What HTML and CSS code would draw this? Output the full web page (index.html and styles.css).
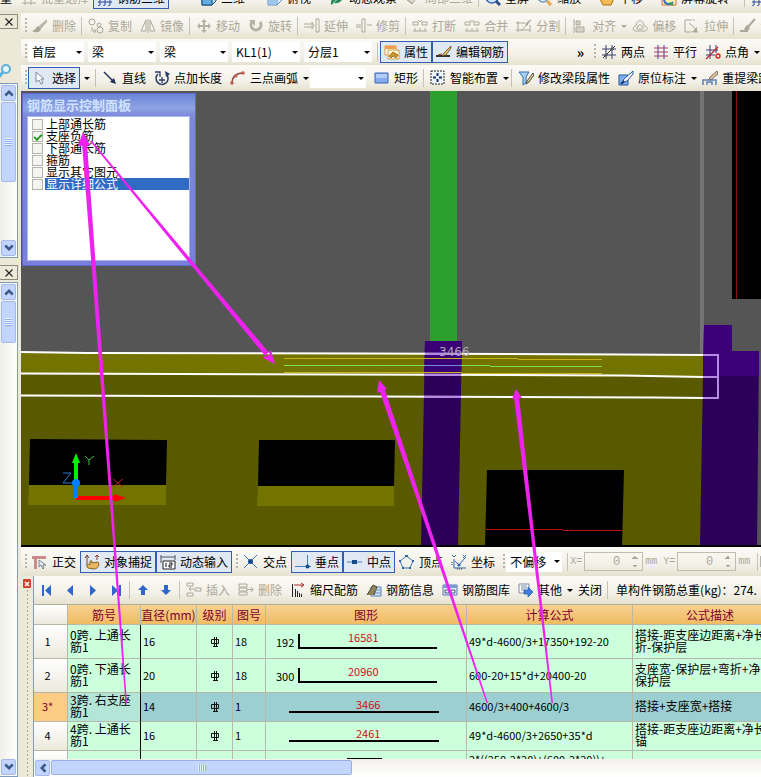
FILE: index.html
```html
<!DOCTYPE html>
<html lang="zh-CN">
<head>
  <meta charset="UTF-8">
  <meta name="viewport" content="width=device-width, initial-scale=1.0">
  <title>编辑钢筋</title>
  <link rel="stylesheet" href="styles.css">
</head>
<body>
  <!-- icon sprite -->
  <svg class="sprite" aria-hidden="true">
    <symbol id="i-batch" viewBox="0 0 16 16"><path d="M1 8h14M1 13h14M4 6v9M10 6v9M1 4h4v4H1zM8 2h5v5H8z" fill="none" stroke="currentColor"/></symbol>
    <symbol id="i-frame" viewBox="0 0 16 16"><path d="M1 4h14M1 12h14M3 1v14M8 1v14M13 1v14M3 15l-2 1M8 15l-2 1M13 15l-2 1" fill="none" stroke="#27489c"/></symbol>
    <symbol id="i-cube" viewBox="0 0 16 16"><path d="M1 5l4-4h10v10l-4 4H1z" fill="#b6daf5" stroke="#174a7c"/><path d="M1 5h10v10H1z" fill="#62aee4" stroke="#174a7c"/><path d="M11 5l4-4" stroke="#174a7c"/></symbol>
    <symbol id="i-top" viewBox="0 0 16 16"><path d="M1 7l5-5h9v8l-5 5H1z" fill="#d9edfb" stroke="#5a86c8"/><path d="M1 7h9v8M10 7l5-5" fill="none" stroke="#5a86c8"/><path d="M2 8h8v6H2z" fill="#9cc8f0"/></symbol>
    <symbol id="i-orbit" viewBox="0 0 16 16"><path d="M2 12C4 4 9 8 14 2c1 7-2 12-9 11l-3 2z" fill="#23875a"/><path d="M4 13l6-5" stroke="#b3e6c6"/></symbol>
    <symbol id="i-part" viewBox="0 0 16 16"><path d="M2 10l8-8 4 3-7 9z" fill="#ddd9cb" stroke="currentColor"/><path d="M3 10l4 3" stroke="currentColor"/></symbol>
    <symbol id="i-full" viewBox="0 0 16 16"><circle cx="7" cy="7" r="6" fill="#cfe6fb" stroke="#3566b0" stroke-width="1.5"/><path d="M4 7h6M7 4v6" stroke="#1c3f86" stroke-width="2"/><path d="M11 11l4 4" stroke="#2f4d84" stroke-width="3"/></symbol>
    <symbol id="i-zoom" viewBox="0 0 16 16"><circle cx="6" cy="7" r="5" fill="#e4f1fd" stroke="#6a97cf" stroke-width="1.5"/><path d="M10 11l4 4" stroke="#e3a84c" stroke-width="3"/></symbol>
    <symbol id="i-hand" viewBox="0 0 16 16"><path d="M4 15L1 9l2-1 2 2V3l2-1 1 1 2-1 1 2 2 0 1 7-2 4z" fill="#f4bd53" stroke="#a86f15"/></symbol>
    <symbol id="i-rot" viewBox="0 0 16 16"><path d="M1 1h14v14H1z" fill="#fff2a8" stroke="#d66a4a"/><path d="M3 10a5 5 0 0 0 9 2M5 6a5 4 0 0 1 8 3" fill="none" stroke="#2f74c4" stroke-width="2"/><path d="M8 13l4 2" stroke="#3aa04a" stroke-width="2"/></symbol>
    <symbol id="i-brush" viewBox="0 0 16 16"><path d="M15 1L7 8l2 3 6-7z" fill="#b9b6a8"/><path d="M7 8c-3 0-3 4-7 5 3 2 8 2 9-2z" fill="#aaa798"/></symbol>
    <symbol id="i-copy" viewBox="0 0 16 16"><circle cx="4" cy="4" r="3" fill="none" stroke="currentColor"/><circle cx="11" cy="7" r="2" fill="none" stroke="currentColor"/><circle cx="12" cy="12" r="3" fill="none" stroke="currentColor"/><path d="M4 9v4h3M6 11l2 2-2 2" fill="none" stroke="currentColor"/></symbol>
    <symbol id="i-mirror" viewBox="0 0 16 16"><path d="M6 2v11H1zM10 2v11h5zM8 1v14" fill="none" stroke="currentColor"/></symbol>
    <symbol id="i-move" viewBox="0 0 16 16"><path d="M8 1l3 3H9v3h3V5l3 3-3 3V9H9v3h2l-3 3-3-3h2V9H4v2L1 8l3-3v2h3V4H5z" fill="#b5b2a4"/></symbol>
    <symbol id="i-rotate" viewBox="0 0 16 16"><path d="M4 4a5 5 0 1 0 8 0" fill="none" stroke="#b5b2a4" stroke-width="3"/><path d="M1 2h6v6z" fill="#b5b2a4"/></symbol>
    <symbol id="i-extend" viewBox="0 0 16 16"><path d="M0 6h7M0 9h7M12 1h3v13h-3zM8 4v7l2-3z" fill="none" stroke="currentColor"/></symbol>
    <symbol id="i-trim" viewBox="0 0 16 16"><path d="M0 7h5M11 7h5M6 1h3v13H6zM0 9h5" fill="none" stroke="currentColor"/></symbol>
    <symbol id="i-break" viewBox="0 0 16 16"><path d="M1 4h5v3H1zM10 4h5v3h-5zM1 13h14M8 10v3M3 10v3M13 10v3M6 2l2 2M10 2L8 4" fill="none" stroke="currentColor"/></symbol>
    <symbol id="i-split" viewBox="0 0 16 16"><path d="M0 5h9M0 12h14M2 3v11M14 7v7M15 2L5 13" fill="none" stroke="currentColor"/><path d="M15 1L9 6l2 2z" fill="currentColor"/></symbol>
    <symbol id="i-align" viewBox="0 0 16 16"><path d="M2 1v14M4 3h4v4H4zM4 9h8v5H4z" fill="#d6d3c5" stroke="currentColor"/></symbol>
    <symbol id="i-offset" viewBox="0 0 16 16"><path d="M3 13c-3-1-2-5 1-5 0-7 8-7 8 0 4 0 4 5 1 5z" fill="none" stroke="currentColor"/><path d="M5 11c-1-2 1-2 1-2 0-3 4-3 4 0 2 0 2 2 0 2z" fill="none" stroke="currentColor"/></symbol>
    <symbol id="i-stretch" viewBox="0 0 16 16"><path d="M8 2H1v12h7M9 2h2M9 14h5" fill="none" stroke="currentColor"/><path d="M5 5l7 6" stroke="currentColor"/><path d="M13 9v5H8z" fill="currentColor"/></symbol>
    <symbol id="i-set" viewBox="0 0 16 16"><path d="M0 13h8M15 1L6 11" stroke="currentColor" stroke-width="2"/><path d="M7 7l3 3-3 4-3-3z" fill="currentColor"/></symbol>
    <symbol id="i-prop" viewBox="0 0 16 16"><path d="M1 2h11v9H1z" fill="#fff" stroke="#e88f38"/><path d="M1 2h11v3H1z" fill="#f0a04c"/><path d="M4 6h11v9H4z" fill="#fff6d8" stroke="#c9a04a"/><path d="M5 12l4-4 5 3-2 3-3-2-2 2z" fill="#c9962a" stroke="#7b5712" stroke-width=".7"/></symbol>
    <symbol id="i-edit" viewBox="0 0 16 16"><path d="M0 12h14" stroke="#333" stroke-width="2"/><path d="M15 2L8 9l-2 3 4-1 5-7z" fill="#e3bd63" stroke="#5d4a1e" stroke-width=".8"/><path d="M2 11l4-1" stroke="#a33"/></symbol>
    <symbol id="i-two" viewBox="0 0 16 16"><path d="M1 5h14M1 11h14M5 1v14M11 1v14" stroke="#3a3f78"/><path d="M2 14L14 2" stroke="#333"/><circle cx="5" cy="11" r="1.6" fill="#555"/><circle cx="11" cy="5" r="1.6" fill="#555"/></symbol>
    <symbol id="i-par" viewBox="0 0 16 16"><path d="M5 1v14M11 1v14" stroke="#3a3fa0"/><path d="M1 4h14M1 8h14M1 12h14" stroke="#b03868"/></symbol>
    <symbol id="i-ang" viewBox="0 0 16 16"><path d="M5 1v14M1 6h12M1 11h9M11 1v8" stroke="#3a3f78"/><path d="M1 15L13 3" stroke="#c02030" stroke-width="1.3"/><circle cx="13" cy="12" r="2" fill="none" stroke="#e02020" stroke-width="1.4"/></symbol>
    <symbol id="i-cursor" viewBox="0 0 16 16"><path d="M4 2v10l3-2 2 4 2-1-2-4h3z" fill="#fff" stroke="#7d879c"/></symbol>
    <symbol id="i-line" viewBox="0 0 16 16"><path d="M2 2l10 10" stroke="#1c2f52" stroke-width="1.4"/><path d="M14 14l-6-2 4-4z" fill="#1c2f52"/></symbol>
    <symbol id="i-len" viewBox="0 0 16 16"><path d="M4 4a6 6 0 1 0 9 1" fill="none" stroke="#2a3c66" stroke-width="1.5"/><path d="M1 2h5v5M5 10h6M8 7v6" fill="none" stroke="#2a3c66" stroke-width="1.3"/><path d="M11 1l5 3-4 3z" fill="#2a3c66"/></symbol>
    <symbol id="i-arc" viewBox="0 0 16 16"><path d="M2 14C2 7 6 3 13 3" fill="none" stroke="#8c4a48" stroke-width="1.5"/><circle cx="2" cy="13" r="1.8" fill="#c45a50"/><circle cx="6" cy="6" r="1.5" fill="#c45a50"/><circle cx="13" cy="3" r="1.8" fill="#c45a50"/></symbol>
    <symbol id="i-rect" viewBox="0 0 16 16"><path d="M1 3h13v10H1z" fill="#84aaf0" stroke="#3d62b8"/><path d="M2 4h11v4H2z" fill="#b4ccf9"/></symbol>
    <symbol id="i-smart" viewBox="0 0 16 16"><path d="M1 1h13v13H1z" fill="#eef4fb" stroke="#222" stroke-dasharray="2 1"/><path d="M7.500 3v3M7.500 9v3M3 7.500h3M9 7.500h3" stroke="#16336e" stroke-width="2"/></symbol>
    <symbol id="i-filter" viewBox="0 0 16 16"><path d="M1 2h10L8 7v6l-3 2V7z" fill="#a9d2f5" stroke="#2f6db0"/><path d="M15 3L9 11l-1 3 3-2 5-7z" fill="#e8d08a" stroke="#4a4a4a"/></symbol>
    <symbol id="i-note" viewBox="0 0 16 16"><path d="M1 5h9v10H1z" fill="#7fb0ea" stroke="#2456a0"/><path d="M15 1L6 9l-2 4 5-2 6-7z" fill="#fff" stroke="#2456a0"/><path d="M3 14l3-3" stroke="#153a78" stroke-width="2"/></symbol>
    <symbol id="i-span" viewBox="0 0 16 16"><path d="M1 15v-5h13v5M5 15v-3h5v3" fill="none" stroke="#5b82b8" stroke-width="1.5"/><path d="M15 1L8 7l-1 3 3-1 6-5z" fill="#d9c3a4" stroke="#80705c"/></symbol>
    <symbol id="i-ortho" viewBox="0 0 16 16"><path d="M0 2h14v3H5v10H2V5H0z" fill="#c98a88"/><path d="M7 6v7l2-2 2 4 1-1-1-3h3z" fill="#e6e9ee" stroke="#5f7184" stroke-width=".8"/></symbol>
    <symbol id="i-snap" viewBox="0 0 16 16"><path d="M3 1v10M13 1v5M1 4l2-3 2 3M11 3l2-2 2 2" fill="none" stroke="#8a3a30"/><path d="M4 14c-3-3 0-5 2-3V7h2v2l6-1c2 3 0 7-4 7z" fill="#eab765" stroke="#8a621c"/></symbol>
    <symbol id="i-dyn" viewBox="0 0 16 16"><path d="M1 1v8M15 1v5M1 3h14" fill="none" stroke="#555"/><path d="M3 7h12v8H3z" fill="#fff" stroke="#222"/><path d="M6 9v4M9 9h3v2H9v2h3" fill="none" stroke="#111"/></symbol>
    <symbol id="i-cross" viewBox="0 0 16 16"><path d="M1 1l13 13M14 1L1 14" stroke="#3e79b8"/><circle cx="7.500" cy="7.500" r="2.500" fill="#174a8c"/></symbol>
    <symbol id="i-perp" viewBox="0 0 16 16"><path d="M0 12.500h16M12.500 1v11" stroke="#4684c0"/><circle cx="12.500" cy="12.500" r="2" fill="#174a8c"/></symbol>
    <symbol id="i-mid" viewBox="0 0 16 16"><path d="M0 8h15" stroke="#4684c0"/><path d="M5 6h5v4H5z" fill="#174a8c"/></symbol>
    <symbol id="i-vertex" viewBox="0 0 16 16"><path d="M7.500 2L14 7l-3 7H4L1 7z" fill="none" stroke="#3f78bb"/><path d="M6 1h3v2H6zM0 6h2v2H0zM13 6h2v2h-2zM3 13h2v2H3zM10 13h2v2h-2z" fill="#2f63a8"/></symbol>
    <symbol id="i-coord" viewBox="0 0 16 16"><path d="M3 5v9h12M4 7l4 4 6-7M1 1l2 2 2-2M12 1l3 3M15 1l-3 3" fill="none" stroke="#2d64aa"/><circle cx="8" cy="11" r="1.600" fill="#2d64aa"/><path d="M1 8v4M6 15h6" stroke="#333" stroke-dasharray="1 1"/></symbol>
    <symbol id="i-first" viewBox="0 0 16 16"><path d="M3 3v11h2V3zM12 3v11L6 8.500z" fill="#2f66cc"/></symbol>
    <symbol id="i-prev" viewBox="0 0 16 16"><path d="M11 3v11L5 8.500z" fill="#2f66cc"/></symbol>
    <symbol id="i-next" viewBox="0 0 16 16"><path d="M5 3v11l6-5.500z" fill="#2f66cc"/></symbol>
    <symbol id="i-last" viewBox="0 0 16 16"><path d="M4 3v11l6-5.500zM11 3v11h2V3z" fill="#2f66cc"/></symbol>
    <symbol id="i-up" viewBox="0 0 16 16"><path d="M8 3l5 5h-3v5H6V8H3z" fill="#2f66cc"/></symbol>
    <symbol id="i-down" viewBox="0 0 16 16"><path d="M8 13l5-5h-3V3H6v5H3z" fill="#2f66cc"/></symbol>
    <symbol id="i-ins" viewBox="0 0 16 16"><path d="M1 1h6v3H1zM1 11h6v3H1zM9 6h6v3H9zM3 7h5M5 5L3 7l2 2" fill="none" stroke="currentColor"/></symbol>
    <symbol id="i-del" viewBox="0 0 16 16"><path d="M1 2h8v3H1zM1 6h8v3H1zM1 10h8v3H1zM9 7.500h6M13 5l2 2.500L13 10" fill="none" stroke="currentColor"/></symbol>
    <symbol id="i-scale" viewBox="0 0 16 16"><path d="M2.500 2v13M5.500 7v8M7.500 9v6M9.500 11v4M11.500 12v3" stroke="#222"/><path d="M4 3h9M11 1l3 2-3 2" fill="none" stroke="#b02828"/></symbol>
    <symbol id="i-info" viewBox="0 0 16 16"><path d="M5 5h10v9H5z" fill="#cfe2f8" stroke="#5b7fb0"/><path d="M1 13L7 3l4 2-3 8" fill="#8e8458" stroke="#4f4a30"/><path d="M9 8h5M9 11h5" stroke="#6d8fc4"/></symbol>
    <symbol id="i-lib" viewBox="0 0 16 16"><path d="M1 3h14v10H1z" fill="#e7eefa" stroke="#5674ac"/><path d="M1 3h14v3H1z" fill="#7d9bd4"/><path d="M3 8h4v3H3zM9 8h4v3H9z" fill="none" stroke="#4a5b80"/></symbol>
    <symbol id="i-other" viewBox="0 0 16 16"><path d="M1 2h10v9H1z" fill="#fff" stroke="#7b8aa8"/><path d="M3 4h6M3 6h6M3 8h4" stroke="#7b8aa8"/><path d="M6 8h4V5l5 5-5 5v-3H6z" fill="#3f7fe0" stroke="#1f4fa0" stroke-width=".7"/></symbol>
    <symbol id="i-x" viewBox="0 0 16 16"><path d="M4 4l8 8M12 4l-8 8" stroke="#222" stroke-width="1.300"/></symbol>
    <symbol id="i-grade" viewBox="0 0 10 12"><path d="M1.500 3.500h7v4h-7zM4.500 1v9M6.500 1v9M3 10.500h5" fill="none" stroke="#111"/></symbol>
    <symbol id="c-up" viewBox="0 0 8 8"><path d="M1 6l3-3 3 3" fill="none" stroke="#3c5a8c" stroke-width="2"/></symbol>
    <symbol id="c-down" viewBox="0 0 8 8"><path d="M1 2l3 3 3-3" fill="none" stroke="#3c5a8c" stroke-width="2"/></symbol>
    <symbol id="c-left" viewBox="0 0 8 8"><path d="M6 1L3 4l3 3" fill="none" stroke="#3c5a8c" stroke-width="2"/></symbol>
  </svg>

  <header class="top-clip">
    <div class="toolbar view-bar">
      <button class="btn cut">量</button>
      <button class="btn" disabled><svg><use href="#i-batch"/></svg>批量选择</button>
      <button class="btn on"><svg><use href="#i-frame"/></svg>钢筋三维</button>
      <span class="space"></span>
      <button class="btn"><svg><use href="#i-cube"/></svg>三维</button>
      <button class="arrow wide" aria-label="三维选项"></button>
      <button class="btn"><svg><use href="#i-top"/></svg>俯视</button>
      <button class="arrow" aria-label="俯视选项"></button>
      <button class="btn"><svg><use href="#i-orbit"/></svg>动态观察</button>
      <button class="btn" disabled><svg><use href="#i-part"/></svg>局部三维</button>
      <i class="sep"></i>
      <button class="btn"><svg><use href="#i-full"/></svg>全屏</button>
      <button class="btn"><svg><use href="#i-zoom"/></svg>缩放</button>
      <button class="arrow" aria-label="缩放选项"></button>
      <button class="btn"><svg><use href="#i-hand"/></svg>平移</button>
      <button class="arrow" aria-label="平移选项"></button>
      <button class="btn"><svg><use href="#i-rot"/></svg>屏幕旋转</button>
      <button class="arrow" aria-label="旋转选项"></button>
      <i class="sep"></i>
      <button class="btn" aria-label="线框"><svg><use href="#i-frame"/></svg></button>
    </div>
  </header>

  <div class="workspace">
    <aside class="dock">
      <button class="dock-close" aria-label="关闭"><svg><use href="#i-x"/></svg></button>
      <div class="dock-search"><svg viewBox="0 0 16 16"><circle cx="6" cy="6" r="4" fill="#e6f6fd" stroke="#5bb0dc" stroke-width="2"/><path d="M3 9l-4 5" stroke="#5bb0dc" stroke-width="3"/></svg></div>
      <div class="vscroll upper">
        <button aria-label="向上"><svg><use href="#c-up"/></svg></button>
        <div class="thumb tall"></div>
        <button class="end" aria-label="向下"><svg><use href="#c-down"/></svg></button>
      </div>
      <button class="dock-close" aria-label="关闭"><svg><use href="#i-x"/></svg></button>
      <div class="vscroll lower">
        <button aria-label="向上"><svg><use href="#c-up"/></svg></button>
        <div class="thumb"></div>
        <button class="end" aria-label="向下"><svg><use href="#c-down"/></svg></button>
      </div>
    </aside>

    <main class="main">
      <div class="toolbar">
        <i class="grip"></i>
        <button class="btn" disabled><svg><use href="#i-brush"/></svg>删除</button>
        <i class="sep"></i>
        <button class="btn" disabled><svg><use href="#i-copy"/></svg>复制</button>
        <button class="btn" disabled><svg><use href="#i-mirror"/></svg>镜像</button>
        <i class="sep"></i>
        <button class="btn" disabled><svg><use href="#i-move"/></svg>移动</button>
        <button class="btn" disabled><svg><use href="#i-rotate"/></svg>旋转</button>
        <i class="sep"></i>
        <button class="btn" disabled><svg><use href="#i-extend"/></svg>延伸</button>
        <button class="btn" disabled><svg><use href="#i-trim"/></svg>修剪</button>
        <i class="sep"></i>
        <button class="btn" disabled><svg><use href="#i-break"/></svg>打断</button>
        <button class="btn" disabled><svg><use href="#i-break"/></svg>合并</button>
        <button class="btn" disabled><svg><use href="#i-split"/></svg>分割</button>
        <i class="sep"></i>
        <button class="btn" disabled><svg><use href="#i-align"/></svg>对齐</button>
        <button class="arrow tight" disabled aria-label="对齐选项"></button>
        <button class="btn" disabled><svg><use href="#i-offset"/></svg>偏移</button>
        <button class="btn" disabled><svg><use href="#i-stretch"/></svg>拉伸</button>
        <i class="sep"></i>
        <button class="btn" disabled><svg><use href="#i-set"/></svg>设置</button>
      </div>

      <div class="toolbar">
        <i class="grip"></i>
        <label class="combo first"><select aria-label="楼层"><option>首层</option></select></label>
        <label class="combo"><select aria-label="构件类型"><option>梁</option></select></label>
        <label class="combo"><select aria-label="构件"><option>梁</option></select></label>
        <label class="combo"><select aria-label="名称"><option>KL1(1)</option></select></label>
        <label class="combo"><select aria-label="分层"><option>分层1</option></select></label>
        <i class="sep"></i>
        <button class="btn on"><svg><use href="#i-prop"/></svg>属性</button>
        <button class="btn on"><svg><use href="#i-edit"/></svg>编辑钢筋</button>
        <span class="more">»</span>
        <i class="grip"></i>
        <button class="btn"><svg><use href="#i-two"/></svg>两点</button>
        <button class="btn"><svg><use href="#i-par"/></svg>平行</button>
        <button class="btn"><svg><use href="#i-ang"/></svg>点角</button>
        <button class="arrow tight" aria-label="点角选项"></button>
      </div>

      <div class="toolbar">
        <i class="grip"></i>
        <button class="btn on"><svg><use href="#i-cursor"/></svg>选择</button>
        <button class="arrow" aria-label="选择选项"></button>
        <i class="sep"></i>
        <button class="btn"><svg><use href="#i-line"/></svg>直线</button>
        <button class="btn"><svg><use href="#i-len"/></svg>点加长度</button>
        <button class="btn"><svg><use href="#i-arc"/></svg>三点画弧</button>
        <button class="arrow tight" aria-label="画弧选项"></button>
        <label class="combo first"><select aria-label="画弧方式"><option></option></select></label>
        <button class="btn"><svg><use href="#i-rect"/></svg>矩形</button>
        <i class="sep"></i>
        <button class="btn"><svg><use href="#i-smart"/></svg>智能布置</button>
        <button class="arrow tight" aria-label="布置选项"></button>
        <i class="sep"></i>
        <button class="btn"><svg><use href="#i-filter"/></svg>修改梁段属性</button>
        <button class="btn"><svg><use href="#i-note"/></svg>原位标注</button>
        <button class="arrow tight" aria-label="标注选项"></button>
        <button class="btn"><svg><use href="#i-span"/></svg>重提梁跨</button>
      </div>

      <section class="canvas">
        <svg class="scene" viewBox="21 91 740 456" preserveAspectRatio="xMinYMin slice">
          <path d="M21 91h740v456H21z" fill="#555"/>
          <path d="M430 91h27v252h-27z" fill="#2ca02c"/>
          <path d="M700 91h4v264h-4z" fill="#747474"/>
          <path d="M732 91h29v208h-29z" fill="#000"/>
          <path d="M736.500 91v208" stroke="#8c1010"/>
          <!-- wall and beam -->
          <path d="M21 352L703 355V547H21z" fill="#595a00"/>
          <path d="M21 352L703 355V377L21 374z" fill="#737300"/>
          <path d="M30 439L167 440 166 485H29z" fill="#000"/>
          <path d="M29 485H166V505H28z" fill="#737300"/>
          <path d="M259 440H395L394 486H258z" fill="#000"/>
          <path d="M258 486H394V506H257z" fill="#737300"/>
          <path d="M487 470H624L622 547H485z" fill="#000"/>
          <path d="M486 529.500H563M563 530.500H622" stroke="#c01010"/>
          <!-- columns -->
          <path d="M425 341H462L458 547H421z" fill="#2c0058"/>
          <path d="M425 341H462L461 376H424z" fill="#3a0075"/>
          <path d="M704 325H732V351H759L757 547H700L703 376z" fill="#2c0058"/>
          <path d="M704 325H732V351H759V376H703z" fill="#3c0078"/>
          <path d="M21 546H761" stroke="#000" stroke-width="2"/>
          <path d="M284 358.500H518M518 359.500H602M284 372.500H462M462 373.500H602" stroke="#c8b020"/>
          <path d="M284 365.500H490M490 366.500H602" stroke="#7be050"/>
          <path d="M21 352L87 353 364 353.500 622 354.500 703 355M21 373.500L345 374.500 624 375.500 703 377M21 395.500L375 396.500 654 397.500 703 398" fill="none" stroke="#fff" stroke-width="2"/>
          <path d="M703 355H718V398H703M703 377H718M425 354H462M424 375H461M424 397H461" fill="none" stroke="#b48ae6" stroke-width="2"/>
          <path d="M425 365.500H461" stroke="#6f86d8"/>
          <text x="439" y="356" class="dim">3466</text>
          <!-- axis marker -->
          <path d="M76 497V463" stroke="#00f000" stroke-width="4"/>
          <path d="M76 453l4 10h-8z" fill="#00f000"/>
          <path d="M76 498h38" stroke="#f00" stroke-width="4"/>
          <path d="M126 498l-12-4v8z" fill="#f00"/>
          <path d="M76 498V484" stroke="#0080ff" stroke-width="4"/>
          <circle cx="76" cy="483" r="4" fill="#0080ff"/>
          <path d="M85 456l4 4 5-4M89 460v5" fill="none" stroke="#40c040"/>
          <path d="M63 473h8l-8 10h9" fill="none" stroke="#2878d8"/>
          <path d="M113 479l10 8M123 479l-10 8" stroke="#c01818"/>
        </svg>

        <div class="panel">
          <h2>钢筋显示控制面板</h2>
          <div class="panel-list">
            <label><input type="checkbox"><span>上部通长筋</span></label>
            <label><input type="checkbox" checked><span>支座负筋</span></label>
            <label><input type="checkbox"><span>下部通长筋</span></label>
            <label><input type="checkbox"><span>箍筋</span></label>
            <label><input type="checkbox"><span>显示其它图元</span></label>
            <label class="selected"><input type="checkbox"><span>显示详细公式</span></label>
          </div>
        </div>
      </section>

      <div class="toolbar snap-bar">
        <i class="grip"></i>
        <button class="btn"><svg><use href="#i-ortho"/></svg>正交</button>
        <button class="btn on"><svg><use href="#i-snap"/></svg>对象捕捉</button>
        <button class="btn on"><svg><use href="#i-dyn"/></svg>动态输入</button>
        <i class="grip"></i>
        <button class="btn"><svg><use href="#i-cross"/></svg>交点</button>
        <button class="btn on"><svg><use href="#i-perp"/></svg>垂点</button>
        <button class="btn on"><svg><use href="#i-mid"/></svg>中点</button>
        <button class="btn"><svg><use href="#i-vertex"/></svg>顶点</button>
        <button class="btn"><svg><use href="#i-coord"/></svg>坐标</button>
        <i class="grip"></i>
        <label class="combo first"><select aria-label="偏移方式"><option>不偏移</option></select></label>
        <i class="sep"></i>
        <label class="num">X=<span><input type="text" value="0" disabled></span>mm</label>
        <label class="num">Y=<span><input type="text" value="0" disabled></span>mm</label>
        <i class="sep"></i>
        <input class="tick" type="checkbox" disabled aria-label="旋转">
      </div>

      <section class="rebar">
        <div class="handle"><button class="red-x" aria-label="关闭"><svg viewBox="0 0 8 8"><path d="M2 2l4 4M6 2L2 6" stroke="#fff" stroke-width="1.500"/></svg></button></div>
        <div class="rebar-body">
          <div class="toolbar rebar-bar">
            <button class="btn nav" aria-label="首行"><svg><use href="#i-first"/></svg></button>
            <button class="btn nav" aria-label="上一行"><svg><use href="#i-prev"/></svg></button>
            <button class="btn nav" aria-label="下一行"><svg><use href="#i-next"/></svg></button>
            <button class="btn nav" aria-label="末行"><svg><use href="#i-last"/></svg></button>
            <i class="sep"></i>
            <button class="btn nav" aria-label="上移"><svg><use href="#i-up"/></svg></button>
            <button class="btn nav" aria-label="下移"><svg><use href="#i-down"/></svg></button>
            <i class="sep"></i>
            <button class="btn" disabled><svg><use href="#i-ins"/></svg>插入</button>
            <button class="btn" disabled><svg><use href="#i-del"/></svg>删除</button>
            <button class="btn"><svg><use href="#i-scale"/></svg>缩尺配筋</button>
            <button class="btn"><svg><use href="#i-info"/></svg>钢筋信息</button>
            <button class="btn"><svg><use href="#i-lib"/></svg>钢筋图库</button>
            <button class="btn"><svg><use href="#i-other"/></svg>其他</button>
            <button class="arrow tight" aria-label="其他选项"></button>
            <button class="btn">关闭</button>
            <i class="sep"></i>
            <span class="total">单构件钢筋总重(kg)：274.</span>
          </div>

          <div class="grid">
            <table>
              <colgroup><col class="c-no"><col class="c-name"><col class="c-dia"><col class="c-grade"><col class="c-fig"><col class="c-shape"><col class="c-calc"><col class="c-desc"></colgroup>
              <thead>
                <tr><th></th><th>筋号</th><th>直径(mm)</th><th>级别</th><th>图号</th><th>图形</th><th>计算公式</th><th>公式描述</th></tr>
              </thead>
              <tbody>
                <tr class="big">
                  <th>1</th><td class="name">0跨. 上通长<br>筋1</td><td>16</td><td class="mid"><svg><use href="#i-grade"/></svg></td><td>18</td>
                  <td class="shape"><svg viewBox="0 0 200 32"><path d="M33 8v14h138" fill="none" stroke="#000" stroke-width="2"/><text x="10" y="21">192</text><text x="82" y="16" class="red">16581</text></svg></td>
                  <td>49*d-4600/3+17350+192-20</td><td class="desc">搭接-距支座边距离+净长<br>折-保护层</td>
                </tr>
                <tr class="big">
                  <th>2</th><td class="name">0跨. 下通长<br>筋1</td><td>20</td><td class="mid"><svg><use href="#i-grade"/></svg></td><td>18</td>
                  <td class="shape"><svg viewBox="0 0 200 32"><path d="M33 8v14h138" fill="none" stroke="#000" stroke-width="2"/><text x="10" y="21">300</text><text x="82" y="16" class="red">20960</text></svg></td>
                  <td>600-20+15*d+20400-20</td><td class="desc">支座宽-保护层+弯折+净<br>保护层</td>
                </tr>
                <tr class="current">
                  <th>3*</th><td class="name">3跨. 右支座<br>筋1</td><td>14</td><td class="mid"><svg><use href="#i-grade"/></svg></td><td>1</td>
                  <td class="shape"><svg viewBox="0 0 200 28"><path d="M23 19h150" stroke="#000" stroke-width="2"/><text x="90" y="16" class="red">3466</text></svg></td>
                  <td>4600/3+400+4600/3</td><td class="desc">搭接+支座宽+搭接</td>
                </tr>
                <tr>
                  <th>4</th><td class="name">4跨. 上通长<br>筋1</td><td>16</td><td class="mid"><svg><use href="#i-grade"/></svg></td><td>1</td>
                  <td class="shape"><svg viewBox="0 0 200 28"><path d="M23 19h150" stroke="#000" stroke-width="2"/><text x="90" y="16" class="red">2461</text></svg></td>
                  <td>49*d-4600/3+2650+35*d</td><td class="desc">搭接-距支座边距离+净长<br>锚</td>
                </tr>
                <tr class="partial">
                  <th></th><td class="name"></td><td></td><td></td><td></td>
                  <td class="shape"><svg viewBox="0 0 200 28"><path d="M82 16V8h33v8" fill="none" stroke="#000" stroke-width="2"/></svg></td>
                  <td>2*((250-2*20)+(600-2*20))+</td><td></td>
                </tr>
              </tbody>
            </table>
          </div>
          <div class="hscroll">
            <button aria-label="向左"><svg><use href="#c-left"/></svg></button>
            <div class="hthumb"></div>
          </div>
        </div>
      </section>
    </main>
  </div>

  <!-- callout arrows -->
  <svg class="callouts" viewBox="0 0 761 777" preserveAspectRatio="xMinYMin slice" aria-hidden="true">
    <path d="M125.500 703L82 143h5L127 703zM83 132l7 13-12 1z"/>
    <path d="M90 141L266 357l4-3L92 141zM275 364l-12-6 8-8z"/>
    <path d="M486.500 703L379 389l5-2L488 703zM379 380l8 9-10 4z"/>
    <path d="M551.500 703L514 397h5L553 703zM516 389l6 9-10 1z"/>
  </svg>
</body>
</html>
```

FILE: styles.css
```css
:root {
  --face: #ece9d8;
  --bar: linear-gradient(#fbfaf6 0%, #f3f1e8 60%, #e6e2d0 100%);
  --line: #7f9db9;
  --active: #2f5fae;
  --green: #ccffdc;
  --scroll: #c3d5fd;
}
* {
  box-sizing: border-box;
}
body {
  margin: 0;
  height: 100vh;
  display: flex;
  flex-direction: column;
  overflow: hidden;
  position: relative;
  background: var(--face);
  color: #000;
  font: 12px/14px "Noto Sans CJK SC", sans-serif;
}
button, select, input {
  font: inherit;
  color: inherit;
  margin: 0;
  padding: 0;
  border: 0;
  background: none;
}
.sprite {
  position: absolute;
  width: 0;
  height: 0;
}

/* toolbars */
.toolbar {
  display: flex;
  align-items: center;
  flex: none;
  height: 26px;
  padding-left: 4px;
  overflow: hidden;
  white-space: nowrap;
  background: var(--bar);
}
.toolbar > * {
  flex: none;
}
.top-clip {
  display: flex;
  flex-direction: column;
  justify-content: flex-end;
  flex: none;
  height: 13px;
  overflow: hidden;
}
.view-bar {
  padding: 0 0 4px;
}
.btn {
  display: flex;
  align-items: center;
  gap: 4px;
  height: 22px;
  padding: 0 3px;
  border: 1px solid transparent;
}
.btn svg {
  width: 16px;
  height: 16px;
}
.btn.on {
  background: #dfe8f3;
  border-color: var(--active);
}
.btn:disabled, .arrow:disabled {
  color: #aca899;
}
.btn.cut {
  padding: 0 4px 0 0;
  border-left: 0;
}
.btn.nav {
  padding: 0 2px;
  margin-right: 1px;
}
.space {
  width: 28px;
}
.arrow {
  width: 14px;
  height: 22px;
  display: flex;
  align-items: center;
  justify-content: center;
}
.arrow::after, .combo::after {
  content: "";
  border: 3px solid transparent;
  border-top-color: currentColor;
  border-bottom: 0;
}
.arrow.tight {
  width: 8px;
}
.view-bar .arrow {
  width: 10px;
}
.view-bar .arrow.wide {
  width: 14px;
}
.sep {
  width: 1px;
  height: 18px;
  margin: 0 2px 0 1px;
  background: #c5c2b2;
}
.grip {
  width: 2px;
  height: 16px;
  margin-right: 1px;
  background: repeating-linear-gradient(#b8b5a6 0 2px, transparent 2px 4px);
}
.combo {
  display: flex;
  align-items: center;
  width: 68px;
  height: 20px;
  margin-right: 4px;
  padding-right: 2px;
  background: #fff;
}
.combo.first {
  width: 56px;
}
.combo select {
  appearance: none;
  flex: 1;
  min-width: 0;
  padding-left: 4px;
  outline: 0;
}
.more {
  width: 86px;
  padding-right: 10px;
  text-align: right;
  font-weight: bold;
  font-size: 14px;
}

/* left dock */
.workspace {
  flex: 1;
  min-height: 0;
  display: flex;
}
.dock {
  flex: none;
  width: 21px;
  display: flex;
  flex-direction: column;
  padding-right: 3px;
}
.dock-close {
  flex: none;
  height: 15px;
  margin-top: 1px;
  border: 1px solid #8d8a7c;
  border-left: 0;
  display: flex;
  align-items: center;
  justify-content: center;
}
.dock-close svg {
  width: 14px;
  height: 14px;
}
.dock-search {
  height: 54px;
  padding-top: 34px;
}
.dock-search svg {
  width: 16px;
  height: 16px;
}
.vscroll {
  display: flex;
  flex-direction: column;
  gap: 1px;
  padding: 1px;
  border: 1px solid var(--line);
  border-left: 0;
  background: linear-gradient(90deg, #f0efe8, #fff);
}
.vscroll.upper {
  height: 175px;
  margin-bottom: 6px;
}
.vscroll.lower {
  flex: 1;
  margin-top: 2px;
}
.vscroll button, .hscroll button {
  flex: none;
  width: 15px;
  height: 16px;
  display: flex;
  align-items: center;
  justify-content: center;
  background: var(--scroll);
  border: 1px solid #a3b9ea;
  border-radius: 2px;
}
.vscroll svg, .hscroll svg {
  width: 10px;
  height: 10px;
}
.vscroll .end {
  margin-top: auto;
}
.thumb {
  flex: none;
  width: 15px;
  height: 42px;
  border: 1px solid #a3b9ea;
  border-radius: 2px;
  background: repeating-linear-gradient(#eef4fe 0 1px, #8cb0f8 1px 2px) center / 7px 8px no-repeat, var(--scroll);
}
.thumb.tall {
  height: 80px;
}

.main {
  flex: 1;
  min-width: 0;
  display: flex;
  flex-direction: column;
}

/* model view */
.canvas {
  position: relative;
  flex: 1;
  min-height: 0;
  overflow: hidden;
  background: #555;
}
.scene {
  display: block;
  width: 100%;
  height: 100%;
}
.dim {
  font: 12px "DejaVu Sans", sans-serif;
  fill: #b0a8b8;
}
.panel {
  position: absolute;
  left: 1px;
  top: 2px;
  width: 174px;
  padding: 2px 5px 4px 4px;
  border: 1px solid #6468cc;
  background: linear-gradient(#6a84d8, #8ea4e4 14px, #7c88dc 22px, #7880dc);
}
.panel h2 {
  margin: 0;
  height: 20px;
  font-size: 13px;
  line-height: 18px;
  color: #cfe2ff;
}
.panel-list {
  height: 145px;
  padding: 1px 0 0 4px;
  border: 1px solid #a8b8ee;
  background: #fff;
}
.panel-list label {
  display: flex;
  align-items: center;
  gap: 2px;
  height: 12px;
  line-height: 12px;
}
.panel-list span {
  flex: 1;
  padding-left: 1px;
}
.panel-list .selected span {
  background: #316ac5;
  color: #fff;
}
.panel-list input, .tick {
  appearance: none;
  width: 11px;
  height: 11px;
  border: 1px solid #b4b4ac;
  background: #f4f4f0;
}
.panel-list input:checked {
  display: grid;
  place-items: center;
}
.panel-list input:checked::after {
  content: "";
  width: 6px;
  height: 3px;
  border: solid #21a121;
  border-width: 0 0 2px 2px;
  transform: rotate(-45deg);
}

/* snap bar */
.snap-bar {
  height: 29px;
}
.snap-bar .grip {
  margin-left: 4px;
}
.snap-bar .grip:first-child {
  margin-left: 0;
}
.num {
  display: flex;
  align-items: center;
  gap: 2px;
  margin-right: 6px;
  color: #aca899;
  font: 10px/14px "Liberation Mono", monospace;
}
.num span {
  display: flex;
  align-items: center;
  width: 59px;
  height: 19px;
  padding-right: 4px;
  border: 1px solid #c0bdac;
}
.num span::after {
  content: "";
  width: 6px;
  height: 12px;
  background:
    conic-gradient(from 135deg at 50% 0, #aca899 90deg, transparent 0) top / 6px 3px no-repeat,
    conic-gradient(from -45deg at 50% 100%, #aca899 90deg, transparent 0) bottom / 6px 3px no-repeat;
}
.num input {
  flex: 1;
  min-width: 0;
  padding-right: 12px;
  text-align: right;
  font-size: 12px;
}

/* rebar editor */
.rebar {
  flex: none;
  display: flex;
}
.handle {
  flex: none;
  width: 12px;
  padding: 3px 2px 0;
  background: repeating-linear-gradient(#aaa798 0 2px, transparent 2px 4px) 6px 14px / 1px 100% no-repeat;
}
.red-x {
  display: block;
  width: 8px;
  height: 9px;
  background: #d0402c;
  border-radius: 1px;
}
.red-x svg {
  display: block;
}
.rebar-body {
  flex: 1;
  min-width: 0;
  border-left: 1px solid var(--line);
}
.rebar-bar {
  height: 28px;
  padding-left: 2px;
}
.total {
  padding-left: 6px;
}
.grid {
  height: 155px;
  overflow: hidden;
  border-top: 1px solid #b0ad9e;
  background: #fff;
}
table {
  table-layout: fixed;
  width: 754px;
  border-collapse: separate;
  border-spacing: 0;
  background: var(--green);
}
.c-no { width: 34px; }
.c-name { width: 73px; }
.c-dia { width: 56px; }
.c-grade { width: 36px; }
.c-fig { width: 33px; }
.c-shape { width: 201px; }
.c-calc { width: 166px; }
.c-desc { width: 155px; }
th, td {
  height: 29px;
  padding: 0 2px 2px;
  border-right: 1px solid #b8b8a8;
  border-bottom: 1px solid #b8b8a8;
  text-align: left;
  white-space: nowrap;
  overflow: hidden;
  font-size: 11px;
  line-height: 12px;
  font-weight: normal;
}
thead th {
  height: 20px;
  text-align: center;
  font-size: 12px;
  color: #800030;
  background: linear-gradient(#f8d090, #f0bc62);
  padding: 0;
}
tbody th {
  text-align: center;
  padding-right: 8px;
  background: linear-gradient(#fff, #ece9dc);
}
thead th:first-child {
  background: linear-gradient(#fff, #ece9dc);
}
.big th, .big td {
  height: 34px;
}
td.name {
  font-size: 12px;
  border-right-color: #000;
}
td.desc {
  font-size: 12px;
}
td.mid {
  text-align: center;
}
td.mid svg {
  width: 10px;
  height: 12px;
  vertical-align: middle;
}
td.shape {
  padding: 0;
}
.shape svg {
  display: block;
  width: 200px;
  height: 28px;
  font-size: 11px;
}
.big .shape svg {
  height: 32px;
}
.red {
  fill: #d01010;
}
.current td {
  background: #9ccfd2;
}
.current td.name {
  background: #b4e6d8;
}
.current th {
  background: #fccb84;
  color: #800030;
}
.partial td {
  vertical-align: top;
  padding-top: 2px;
}
.partial .shape {
  padding-top: 0;
}
.hscroll {
  display: flex;
  gap: 1px;
  padding: 1px;
  background: linear-gradient(#f3f1ec, #fff);
}
.hthumb {
  width: 301px;
  height: 15px;
  border: 1px solid #98b0e8;
  border-radius: 2px;
  background: repeating-linear-gradient(90deg, #eef4fe 0 1px, #8cb0f8 1px 2px) center / 8px 6px no-repeat, var(--scroll);
}
.callouts {
  position: absolute;
  inset: 0;
  width: 100%;
  height: 100%;
  pointer-events: none;
  fill: #ee22ee;
}
```
